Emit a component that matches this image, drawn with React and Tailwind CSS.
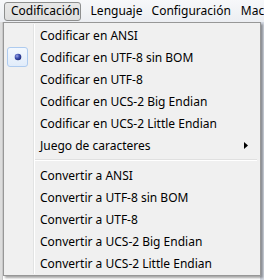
const topItems = [
  { label: 'Codificar en ANSI' },
  { label: 'Codificar en UTF-8 sin BOM', checked: true },
  { label: 'Codificar en UTF-8' },
  { label: 'Codificar en UCS-2 Big Endian' },
  { label: 'Codificar en UCS-2 Little Endian' },
  { label: 'Juego de caracteres', submenu: true },
];

const convertItems = [
  'Convertir a ANSI',
  'Convertir a UTF-8 sin BOM',
  'Convertir a UTF-8',
  'Convertir a UCS-2 Big Endian',
  'Convertir a UCS-2 Little Endian',
];

function RadioMark() {
  return (
    <div className="mx-[2px] mt-[1px] flex h-[20px] w-[21px] items-center justify-center rounded-[3px] border border-[#aecbef] bg-gradient-to-b from-[#f3f8fe] to-[#e1ecfa]">
      <svg width="8" height="8" viewBox="0 0 8 8">
        <defs>
          <radialGradient id="dot" cx="0.35" cy="0.35" r="0.7">
            <stop offset="0" stopColor="#9aa6e6" />
            <stop offset="0.5" stopColor="#3e4fb0" />
            <stop offset="1" stopColor="#1d2a78" />
          </radialGradient>
        </defs>
        <circle cx="4" cy="4" r="3.3" fill="url(#dot)" />
      </svg>
    </div>
  );
}

function MenuItem({ label, checked, submenu }) {
  return (
    <div className="flex h-[22px]">
      <div className="h-full w-[28px] shrink-0">{checked && <RadioMark />}</div>
      <div className="h-full w-[1px] bg-[#e2e3e3]" />
      <div className="h-full w-[1px] bg-white" />
      <div className="flex flex-1 items-center justify-between pl-[5px] pr-[11px] pt-[2px]">
        <span className="leading-none">{label}</span>
        {submenu && (
          <svg width="4" height="7" viewBox="0 0 4 7" className="-mt-[2px]">
            <polygon points="0,0 4,3.5 0,7" fill="#000" />
          </svg>
        )}
      </div>
    </div>
  );
}

function Separator() {
  return (
    <div className="flex h-[8px]">
      <div className="h-full w-[28px] shrink-0" />
      <div className="h-full w-[1px] bg-[#e2e3e3]" />
      <div className="h-full w-[1px] bg-white" />
      <div className="flex flex-1 flex-col justify-center pr-[2px]">
        <div className="h-[1px] bg-[#e0e0e0]" />
        <div className="h-[1px] bg-white" />
      </div>
    </div>
  );
}

export default function App() {
  return (
    <div className="relative h-[280px] w-[264px] overflow-hidden bg-[#e6e6e6] font-['Noto_Sans','Liberation_Sans',sans-serif] text-[12px] text-black">
      <div className="flex h-[22px] items-center bg-gradient-to-b from-[#f7f8fa] to-[#eceef2] pl-[4px]">
        <div className="flex h-[19px] w-[78px] items-center rounded-[3px] border border-[#8e8f8f] bg-gradient-to-b from-[#e8e8e8] to-[#dedede] pl-[6px]">
          Codificación
        </div>
        <div className="w-[61px] pl-[10px]">Lenguaje</div>
        <div className="w-[90px] pl-[10px]">Configuración</div>
        <div className="whitespace-nowrap pl-[10px]">Macro</div>
      </div>

      <div className="flex h-[258px]">
        <div className="w-[3px] border-r border-[#c8c8c8] bg-[#dcdcdc]" />
        <div className="flex-1 bg-white" />
        <div className="w-[4px] bg-[#d6dbe4]" />
      </div>

      <div className="absolute left-[3px] top-[22px] w-[258px] border border-[#979797] bg-[#f0f0f0] px-[1px] py-[1px] shadow-[2px_2px_2px_rgba(0,0,0,0.35)]">
        {topItems.map((item) => (
          <MenuItem key={item.label} {...item} />
        ))}
        <Separator />
        {convertItems.map((label) => (
          <MenuItem key={label} label={label} />
        ))}
      </div>
    </div>
  );
}
